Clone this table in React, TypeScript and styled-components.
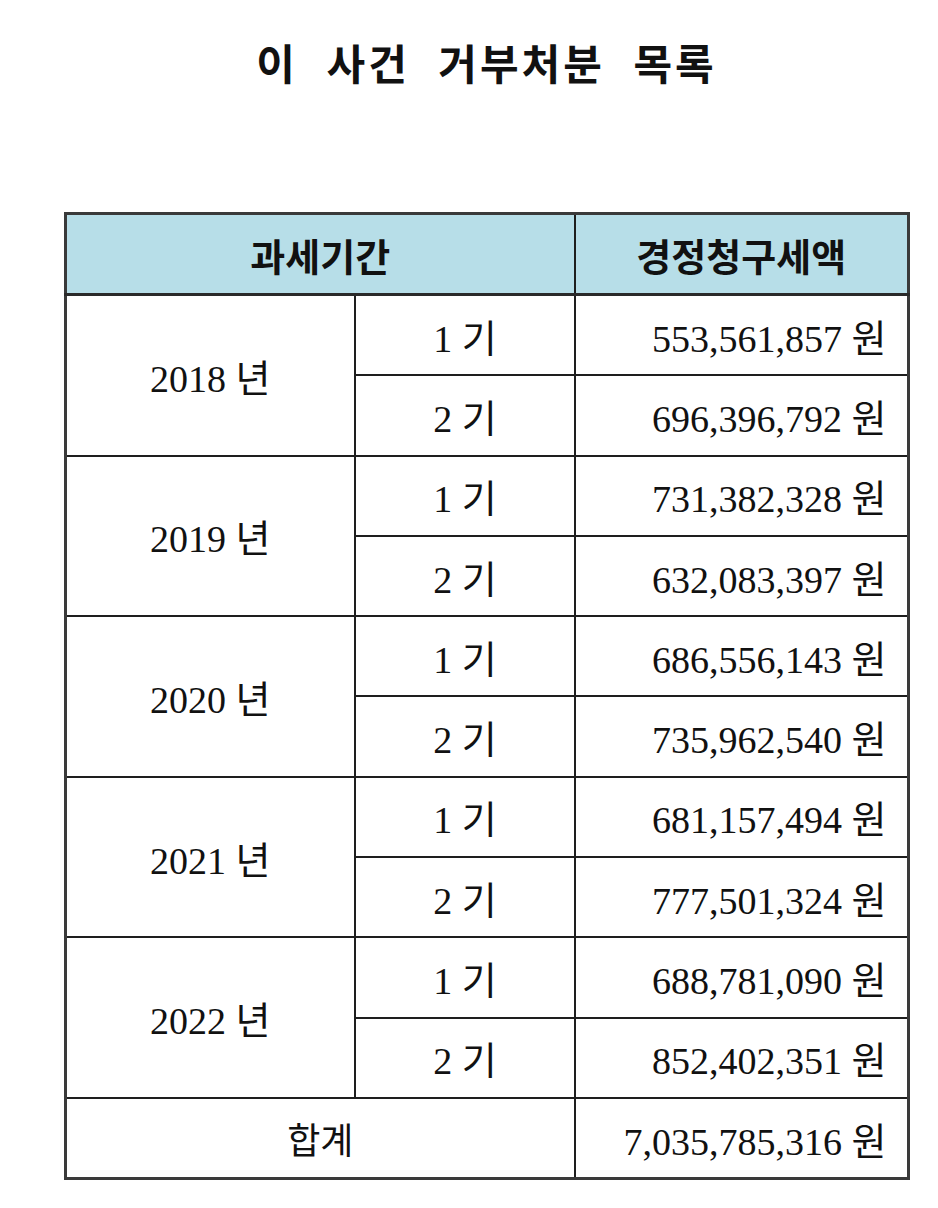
import React from "react";
import styled, { createGlobalStyle } from "styled-components";

const GlobalStyle = createGlobalStyle`
  html, body {
    margin: 0;
    padding: 0;
    background: #ffffff;
  }
`;

const Page = styled.div`
  width: 938px;
  min-height: 1208px;
  box-sizing: border-box;
  padding: 37px 0 0 65px;
`;

const Sheet = styled.div`
  width: 843px;
  display: flex;
  flex-direction: column;
  align-items: center;
`;

const Title = styled.h1`
  margin: 0;
  height: 50px;
  line-height: 50px;
  font-family: "Noto Sans CJK KR", "Noto Sans", sans-serif;
  font-weight: 700;
  font-size: 42px;
  letter-spacing: 3px;
  word-spacing: 16px;
  color: #111;
`;

const Table = styled.table`
  margin-top: 125px;
  width: 843px;
  border-collapse: collapse;
  border: 3px solid #3a3a3a;
  table-layout: fixed;
`;

const Head = styled.th`
  height: 78px;
  padding: 0;
  background: #b7dee8;
  border: 2px solid #1e1e1e;
  border-bottom: 3px solid #2a2a2a;
  font-family: "Noto Sans CJK KR", sans-serif;
  font-weight: 700;
  font-size: 38px;
  color: #111;
  text-align: center;
`;

const Cell = styled.td<{ $align?: "center" | "right"; $sans?: boolean }>`
  height: 78.3px;
  padding: 0 ${(p) => (p.$align === "right" ? "20px" : "0")} 0 0;
  border: 2px solid #1e1e1e;
  text-align: ${(p) => p.$align || "center"};
  vertical-align: middle;
  font-family: ${(p) =>
    p.$sans
      ? `"Noto Sans CJK KR", sans-serif`
      : `"Liberation Serif", "Noto Sans CJK KR", serif`};
  font-weight: 400;
  font-size: ${(p) => (p.$sans ? "36px" : "38px")};
  color: #111;
  white-space: nowrap;
`;

type Row = { year: number; amounts: [string, string] };

const rows: Row[] = [
  { year: 2018, amounts: ["553,561,857", "696,396,792"] },
  { year: 2019, amounts: ["731,382,328", "632,083,397"] },
  { year: 2020, amounts: ["686,556,143", "735,962,540"] },
  { year: 2021, amounts: ["681,157,494", "777,501,324"] },
  { year: 2022, amounts: ["688,781,090", "852,402,351"] },
];

const App = () => {
  return (
    <>
      <GlobalStyle />
      <Page>
        <Sheet>
          <Title>이 사건 거부처분 목록</Title>
          <Table>
            <colgroup>
              <col style={{ width: 290 }} />
              <col style={{ width: 220 }} />
              <col style={{ width: 333 }} />
            </colgroup>
            <thead>
              <tr>
                <Head colSpan={2}>과세기간</Head>
                <Head>경정청구세액</Head>
              </tr>
            </thead>
            <tbody>
              {rows.map((r) => (
                <React.Fragment key={r.year}>
                  <tr>
                    <Cell rowSpan={2}>{r.year} 년</Cell>
                    <Cell>1 기</Cell>
                    <Cell $align="right">{r.amounts[0]} 원</Cell>
                  </tr>
                  <tr>
                    <Cell>2 기</Cell>
                    <Cell $align="right">{r.amounts[1]} 원</Cell>
                  </tr>
                </React.Fragment>
              ))}
              <tr>
                <Cell colSpan={2} $sans>
                  합계
                </Cell>
                <Cell $align="right">7,035,785,316 원</Cell>
              </tr>
            </tbody>
          </Table>
        </Sheet>
      </Page>
    </>
  );
};

export default App;
